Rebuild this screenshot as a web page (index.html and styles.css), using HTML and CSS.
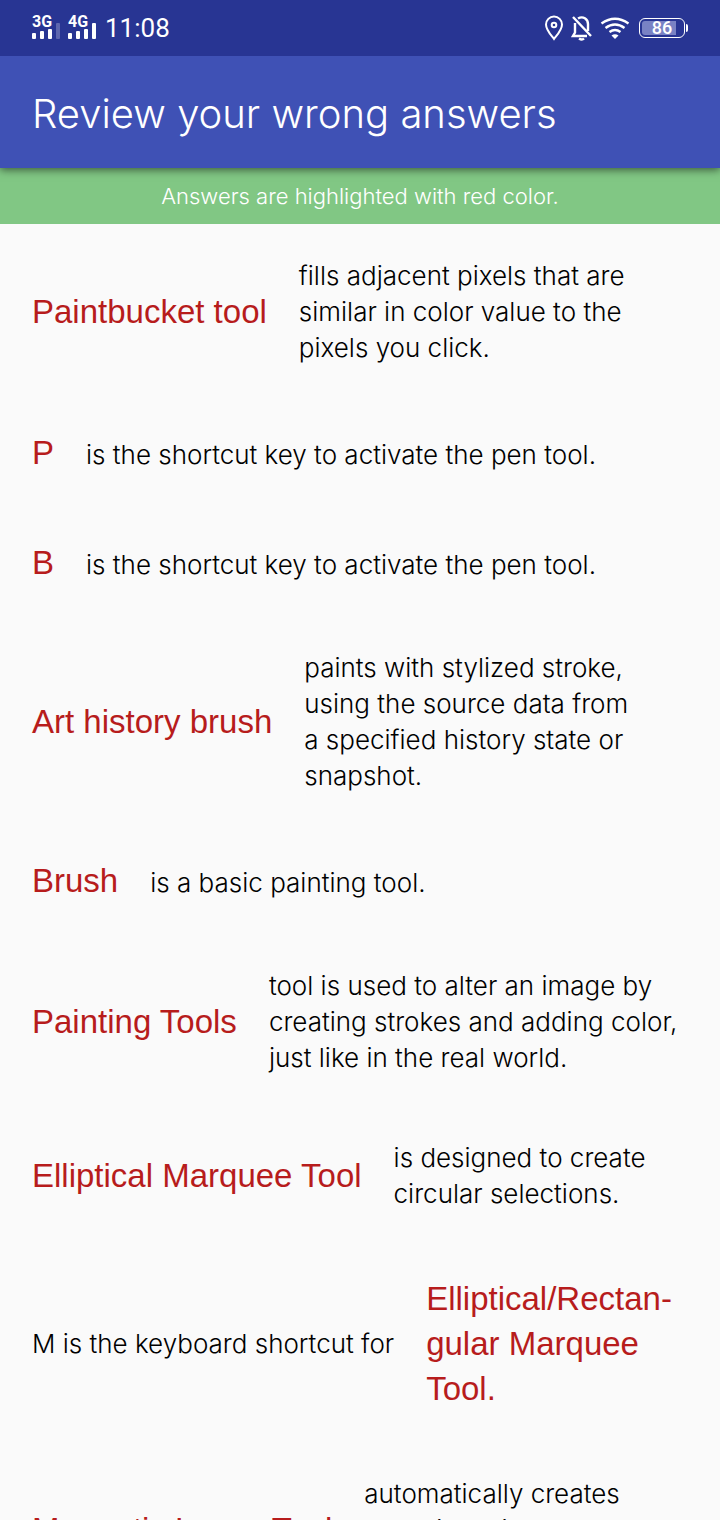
FILE: index.html
```html
<!DOCTYPE html>
<html lang="en">
<head>
<meta charset="utf-8">
<meta name="viewport" content="width=device-width, initial-scale=1">
<title>Review your wrong answers</title>
<link rel="stylesheet" href="styles.css">
</head>
<body>
<div class="status">
  <div class="status-group">
    <svg class="signals" viewBox="0 -3 66 32" role="img" aria-label="3G and 4G signal">
      <g class="net-label"><text x="0" y="12">3G</text><text x="36" y="12">4G</text></g>
      <g fill="#fff"><rect x="0" y="18" width="4" height="6" rx="1"/><rect x="8" y="16" width="4" height="8" rx="1"/><rect x="16" y="14" width="4" height="10" rx="1"/><rect x="24" y="8" width="4" height="16" rx="1" opacity=".25"/><rect x="36" y="18" width="4" height="6" rx="1"/><rect x="44" y="16" width="4" height="8" rx="1"/><rect x="52" y="14" width="4" height="10" rx="1"/><rect x="60" y="8" width="4" height="16" rx="1"/></g>
    </svg>
    <span class="clock">11:08</span>
  </div>
  <div class="status-group status-icons">
    <svg width="20" height="26" viewBox="0 0 20 26" fill="none" stroke="#fff" stroke-width="2" aria-hidden="true"><path d="M10 24C7 20 2 15 2 9.500a8 8 0 0 1 16 0C18 15 13 20 10 24Z"/><circle cx="10" cy="10" r="2.300"/></svg>
    <svg width="22" height="26" viewBox="0 0 22 26" fill="none" stroke="#fff" stroke-width="2.400" aria-hidden="true"><path d="M2 2 20 21M4 8v9.500l-2 3.500h14M7 3.500C12 .5 17 4 17 9v7"/><path d="M8 23.500q3 2 5 0"/></svg>
    <svg width="30" height="26" viewBox="0 0 30 26" fill="none" stroke="#fff" stroke-width="2.400" aria-hidden="true"><path d="M1.500 8.500Q15-1 28.500 8.500M5.500 13Q15 6 24.500 13M9.500 17Q15 13 20.500 17"/><path d="m11.500 20.500q3.500-2.500 7 0l-3.500 3.500Z" fill="#fff" stroke="none"/></svg>
    <div class="battery"><span class="battery-level">86</span></div>
  </div>
</div>
<header class="appbar"><h1 class="title">Review your wrong answers</h1></header>
<p class="notice">Answers are highlighted with red color.</p>
<main class="list">
  <div class="row"><span class="term">Paintbucket tool</span><span class="text">fills adjacent pixels that are similar in color value to the pixels you click.</span></div>
  <div class="row row-line"><span class="term">P</span><span class="text">is the shortcut key to activate the pen tool.</span></div>
  <div class="row row-line"><span class="term">B</span><span class="text">is the shortcut key to activate the pen tool.</span></div>
  <div class="row"><span class="term">Art history brush</span><span class="text">paints with stylized stroke, using the source data from a&nbsp;specified history state or snapshot.</span></div>
  <div class="row row-line"><span class="term">Brush</span><span class="text">is a basic painting tool.</span></div>
  <div class="row"><span class="term">Painting Tools</span><span class="text">tool is used to alter an image by creating strokes and adding color, just like in the real world.</span></div>
  <div class="row"><span class="term">Elliptical Marquee Tool</span><span class="text">is designed to create circular selections.</span></div>
  <div class="row"><span class="text lead">M is the keyboard shortcut for</span><span class="term answer">Elliptical/Rectan&shy;gular Marquee Tool.</span></div>
  <div class="row"><span class="term">Magnetic Lasso Tool</span><span class="text">automatically creates<br>selection with the<br>edges.</span></div>
</main>
</body>
</html>
```
FILE: styles.css
```css
* { box-sizing: border-box; }
body {
  margin: 0;
  height: 100vh;
  overflow: hidden;
  display: flex;
  flex-direction: column;
  background: #fafafa;
  color: #000;
  font-family: Inter, "Liberation Sans", sans-serif;
}
.status {
  flex: none;
  position: relative;
  z-index: 2;
  height: 56px;
  padding: 0 35px 0 32px;
  display: flex;
  align-items: center;
  justify-content: space-between;
  background: #283593;
  color: #fff;
}
.status-group { display: flex; align-items: center; gap: 7px; }
.signals { width: 66px; height: 32px; }
.net-label { font: 700 16px Roboto, sans-serif; fill: #fff; }
.clock { font: 26px/32px Roboto, sans-serif; }
.battery {
  position: relative;
  width: 46px;
  height: 20px;
  margin-left: 2px;
  padding: 2px;
  border: 1px solid #fff;
  border-radius: 6px;
}
.battery::after {
  content: "";
  position: absolute;
  top: 5px;
  right: -4px;
  width: 2px;
  height: 8px;
  border-radius: 0 2px 2px 0;
  background: #fff;
}
.battery-level {
  display: block;
  height: 14px;
  border-radius: 3px;
  background: linear-gradient(90deg, #7982c4 86%, transparent 86%);
  font: 500 18px/14px Roboto, sans-serif;
  text-align: center;
}
.appbar {
  flex: none;
  position: relative;
  height: 112px;
  padding: 4px 32px 0;
  display: flex;
  align-items: center;
  background: #3f51b5;
  color: #fff;
  box-shadow: 0 2px 8px rgba(0, 0, 0, .55);
}
.title { margin: 0; font-size: 40px; line-height: 48px; font-weight: 300; }
.notice {
  flex: none;
  margin: 0;
  padding: 14px 32px;
  background: #81c784;
  color: #fff;
  font-size: 22px;
  line-height: 28px;
  font-weight: 300;
  text-align: center;
}
.list {
  flex: 1;
  min-height: 0;
  overflow: hidden;
  padding: 34px 32px;
  display: flex;
  flex-direction: column;
  gap: 64px;
}
.row { flex: none; display: flex; align-items: center; gap: 32px; }
.row-line { align-items: baseline; }
.term {
  flex: none;
  padding-bottom: 1px;
  color: #b71c1c;
  font-family: "Liberation Sans", Arial, sans-serif;
  font-size: 33px;
  line-height: 45px;
}
.text { flex: 0 1 auto; font-size: 26px; line-height: 36px; font-weight: 300; }
.lead { flex: none; }
.answer { flex: 0 1 auto; }
```
